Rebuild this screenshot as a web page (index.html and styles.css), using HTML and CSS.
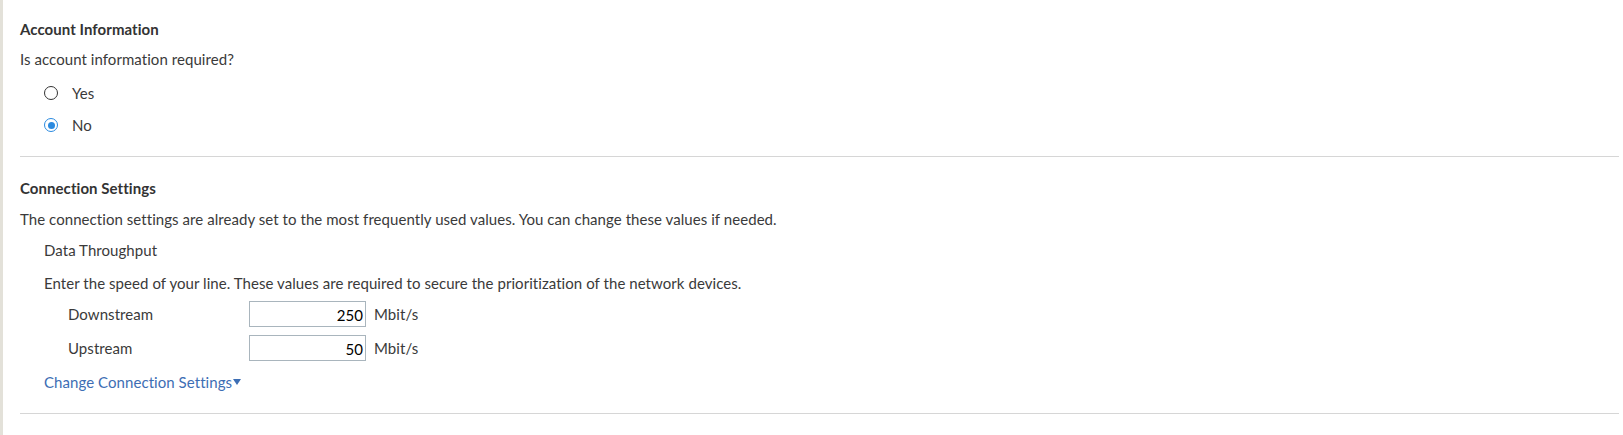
FILE: index.html
```html
<!DOCTYPE html>
<html lang="en">
<head>
<meta charset="utf-8">
<title>Account Information</title>
<link rel="stylesheet" href="styles.css">
</head>
<body>
<div class="page">
  <section class="block block-account">
    <h2 class="title">Account Information</h2>
    <p class="text">Is account information required?</p>
    <div class="radios">
      <label class="radio"><span class="dot"></span><span>Yes</span></label>
      <label class="radio"><span class="dot checked"></span><span>No</span></label>
    </div>
  </section>
  <section class="block block-conn">
    <h2 class="title">Connection Settings</h2>
    <p class="text">The connection settings are already set to the most frequently used values. You can change these values if needed.</p>
    <div class="sub">
      <p class="text">Data Throughput</p>
      <p class="text gap">Enter the speed of your line. These values are required to secure the prioritization of the network devices.</p>
      <div class="rows">
        <div class="row"><span class="lbl">Downstream</span><span class="input">250</span><span class="unit">Mbit/s</span></div>
        <div class="row"><span class="lbl">Upstream</span><span class="input">50</span><span class="unit">Mbit/s</span></div>
      </div>
      <a class="link" href="#">Change Connection Settings<span class="caret"></span></a>
    </div>
  </section>
</div>
</body>
</html>
```
FILE: styles.css
```css
html, body {
  margin: 0;
  padding: 0;
  background: #fff;
}
body {
  font-family: "Source Sans Pro", "Lato", "Liberation Sans", sans-serif;
  font-size: 15px;
  line-height: 20px;
  letter-spacing: 0.06px;
  color: #3a3a3a;
}
.page {
  min-height: 435px;
  box-sizing: border-box;
  border-left: 3px solid #e3e1d9;
  padding: 0 4px 0 17px;
}
.block {
  border-bottom: 1px solid #d6d6d6;
}
.block-account {
  padding: 19px 0 15px;
}
.block-conn {
  padding: 21px 0 21px;
}
.title {
  margin: 0;
  font-size: 15px;
  line-height: 20px;
  font-weight: bold;
  color: #333;
}
.text {
  margin: 10px 0 0;
}
.block-conn .text { margin-top: 11px; }
.block-conn .sub .text { margin-top: 11px; }
.block-conn .sub .text.gap { margin-top: 13px; }
.sub {
  padding-left: 24px;
}
.radios {
  margin-top: 8px;
  padding-left: 24px;
}
.radio {
  display: flex;
  align-items: center;
  gap: 14px;
  height: 32px;
}
.dot {
  box-sizing: border-box;
  width: 14px;
  height: 14px;
  border: 1.75px solid #333;
  border-radius: 50%;
  display: flex;
  align-items: center;
  justify-content: center;
}
.dot.checked {
  border-color: #2a8ae0;
}
.dot.checked::after {
  content: "";
  width: 7px;
  height: 7px;
  border-radius: 50%;
  background: #2a8ae0;
}
.rows {
  margin-top: 8px;
  padding-left: 24px;
}
.row {
  display: flex;
  align-items: center;
  height: 26px;
  margin-bottom: 8px;
}
.lbl {
  width: 181px;
}
.input {
  box-sizing: border-box;
  width: 117px;
  height: 26px;
  border: 1px solid #a9b5bd;
  text-align: right;
  padding: 3px 2px 0 0;
  color: #000;
}
.unit {
  margin-left: 8px;
}
.link {
  display: inline-flex;
  align-items: center;
  margin-top: 3px;
  color: #3d6eb4;
  text-decoration: none;
}
.caret {
  width: 0;
  height: 0;
  margin-left: 1px;
  border-left: 4.5px solid transparent;
  border-right: 4.5px solid transparent;
  border-top: 6px solid #3d6eb4;
}
```
